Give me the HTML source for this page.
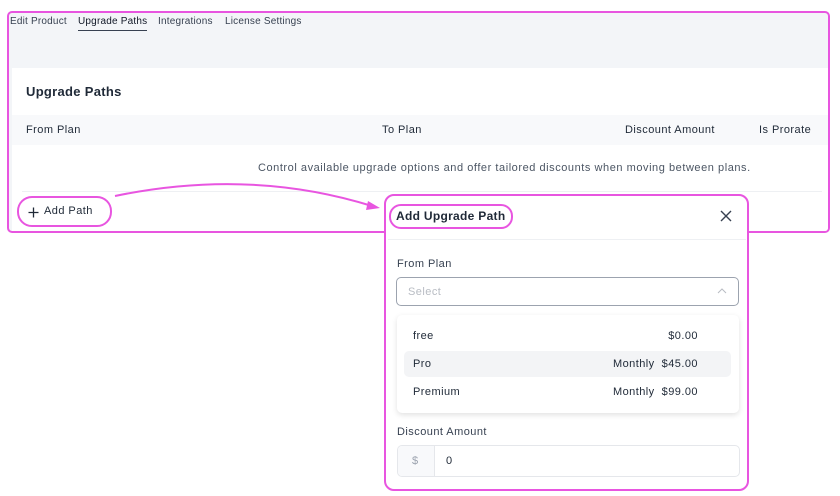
<!DOCTYPE html>
<html><head><style>
*{box-sizing:border-box;margin:0;padding:0}
body{width:840px;height:496px;background:#fff;font-family:"Liberation Sans",sans-serif;position:relative;overflow:hidden;color:#1f2937;letter-spacing:.45px}
.a{position:absolute}
.pk{border:2px solid #e855e0}
</style></head><body>
<div class="a pk" style="left:7px;top:11px;width:823px;height:222px;border-radius:5px;background:#f3f5f8;overflow:hidden">
  <div class="a" style="left:1px;top:3px;font-size:10px;color:#374151;white-space:nowrap;letter-spacing:.2px">Edit Product</div>
  <div class="a" style="left:69px;top:3px;font-size:10px;color:#111827;white-space:nowrap;border-bottom:1.5px solid #374151;padding-bottom:3px;letter-spacing:.2px">Upgrade Paths</div>
  <div class="a" style="left:149px;top:3px;font-size:10px;color:#374151;letter-spacing:.2px">Integrations</div>
  <div class="a" style="left:216px;top:3px;font-size:10px;color:#374151;white-space:nowrap;letter-spacing:.2px">License Settings</div>
  <div class="a" style="left:3px;top:55px;width:820px;height:170px;background:#fff">
    <div class="a" style="left:14px;top:16px;font-size:13px;font-weight:bold;color:#1f2937;white-space:nowrap;letter-spacing:.3px">Upgrade Paths</div>
    <div class="a" style="left:0;top:47px;width:820px;height:30px;background:#f8f9fb"></div>
    <div class="a" style="left:14px;top:56px;font-size:11px;color:#1f2937">From Plan</div>
    <div class="a" style="left:370px;top:56px;font-size:11px;color:#1f2937">To Plan</div>
    <div class="a" style="left:613px;top:56px;font-size:11px;color:#1f2937;white-space:nowrap">Discount Amount</div>
    <div class="a" style="left:747px;top:56px;font-size:11px;color:#1f2937;white-space:nowrap">Is Prorate</div>
    <div class="a" style="left:246px;top:94px;font-size:11px;color:#4b5563;white-space:nowrap;letter-spacing:.55px">Control available upgrade options and offer tailored discounts when moving between plans.</div>
    <div class="a" style="left:10px;top:123px;width:800px;height:1px;background:#eef0f3"></div>
  </div>
</div>
<div class="a pk" style="left:17px;top:196px;width:95px;height:31px;border-radius:15px;background:#fff"></div>
<svg class="a" style="left:28px;top:207px" width="11" height="11"><path d="M5.5 0.5 V10.5 M0.5 5.5 H10.5" stroke="#1f2937" stroke-width="1.3"/></svg>
<div class="a" style="left:44px;top:205px;font-size:11px;color:#1f2937;white-space:nowrap">Add Path</div>
<svg class="a" style="left:0;top:0" width="840" height="496"><path d="M115 196 Q250 168 372 206" fill="none" stroke="#e855e0" stroke-width="2"/><path d="M380 208 L368 201 L366 210 Z" fill="#e855e0"/></svg>
<div class="a pk" style="left:384px;top:194px;width:365px;height:297px;border-radius:10px;background:#fff">
  <div class="a" style="left:2px;top:43px;width:358px;height:1px;background:#eef0f3"></div>
  <div class="a" style="left:11px;top:62px;font-size:11px;color:#374151;white-space:nowrap">From Plan</div>
  <div class="a" style="left:10px;top:81px;width:343px;height:29px;border:1px solid #9ca3af;border-radius:5px"></div>
  <div class="a" style="left:22px;top:90px;font-size:11px;color:#b8bcc3">Select</div>
  <svg class="a" style="left:331px;top:91px" width="10" height="8"><path d="M1 6 L5 2 L9 6" fill="none" stroke="#b8bcc3" stroke-width="1"/></svg>
  <div class="a" style="left:11px;top:119px;width:342px;height:98px;border-radius:5px;background:#fff;box-shadow:0 2px 6px rgba(0,0,0,.12)"></div>
  <div class="a" style="left:18px;top:155px;width:327px;height:26px;border-radius:5px;background:#f3f4f6"></div>
  <div class="a" style="left:27px;top:134px;font-size:11px">free</div>
  <div class="a" style="right:49px;top:134px;font-size:11px">$0.00</div>
  <div class="a" style="left:27px;top:162px;font-size:11px">Pro</div>
  <div class="a" style="right:49px;top:162px;font-size:11px;white-space:nowrap">Monthly&nbsp; $45.00</div>
  <div class="a" style="left:27px;top:190px;font-size:11px">Premium</div>
  <div class="a" style="right:49px;top:190px;font-size:11px;white-space:nowrap">Monthly&nbsp; $99.00</div>
  <div class="a" style="left:11px;top:230px;font-size:11px;color:#374151;white-space:nowrap">Discount Amount</div>
  <div class="a" style="left:11px;top:249px;width:343px;height:32px;border:1px solid #e5e7eb;border-radius:5px;overflow:hidden">
    <div class="a" style="left:0;top:0;width:37px;height:32px;background:#f8f9fb;border-right:1px solid #e5e7eb"></div>
    <div class="a" style="left:14px;top:9px;font-size:11px;color:#9ca3af">$</div>
    <div class="a" style="left:48px;top:9px;font-size:11px">0</div>
  </div>
  <svg class="a" style="left:334px;top:14px" width="12" height="12"><path d="M1 1 L11 11 M11 1 L1 11" stroke="#374151" stroke-width="1.4"/></svg>
</div>
<div class="a pk" style="left:389px;top:204px;width:124px;height:25px;border-radius:12px;background:#fff"></div>
<div class="a" style="left:396px;top:209px;font-size:12px;font-weight:bold;color:#1f2937;white-space:nowrap;letter-spacing:.3px">Add Upgrade Path</div>
</body></html>
